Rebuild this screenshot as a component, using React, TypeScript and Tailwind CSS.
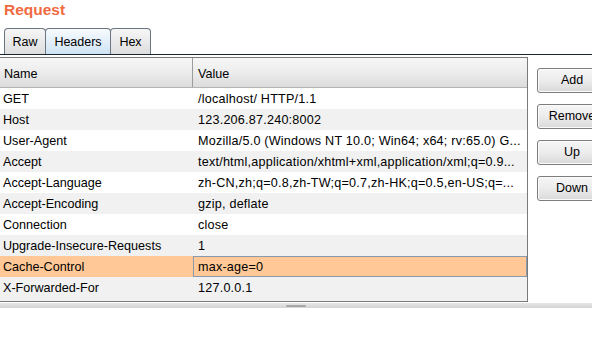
import React from "react";

const rows: [string, string][] = [
  ["GET", "/localhost/ HTTP/1.1"],
  ["Host", "123.206.87.240:8002"],
  ["User-Agent", "Mozilla/5.0 (Windows NT 10.0; Win64; x64; rv:65.0) G..."],
  ["Accept", "text/html,application/xhtml+xml,application/xml;q=0.9..."],
  ["Accept-Language", "zh-CN,zh;q=0.8,zh-TW;q=0.7,zh-HK;q=0.5,en-US;q=..."],
  ["Accept-Encoding", "gzip, deflate"],
  ["Connection", "close"],
  ["Upgrade-Insecure-Requests", "1"],
  ["Cache-Control", "max-age=0"],
  ["X-Forwarded-For", "127.0.0.1"],
];

function Tab({ label, active, w }: { label: string; active?: boolean; w: string }) {
  return (
    <div
      className={
        "h-[26px] flex items-center justify-center border border-b-0 border-[#6c7682] rounded-t-[4px] -mr-px " +
        w +
        (active
          ? " bg-gradient-to-b from-[#f7fbfe] to-[#cfe3f3]"
          : " bg-gradient-to-b from-[#f6f6f6] to-[#dedede]")
      }
    >
      <span className="text-[12.5px] text-black leading-none pt-[2px]">{label}</span>
    </div>
  );
}

function Btn({ label }: { label: string }) {
  return (
    <div className="w-[70px] h-[25px] shrink-0 rounded-[3px] border border-[#7d7d7d] bg-gradient-to-b from-[#f6f6f6] via-[#ececec] to-[#d9d9d9] shadow-[inset_0_0_0_1px_#fbfbfb] flex items-center justify-center">
      <span className="text-[12.5px] text-black leading-none">{label}</span>
    </div>
  );
}

export default function App() {
  return (
    <div className="w-[592px] h-[357px] bg-white overflow-hidden font-['Liberation_Sans',Arial,sans-serif] text-black">
      <div className="h-[20px] pl-[4px] pt-[1px] text-[15.5px] font-bold text-[#f06a3f] leading-[18px]">
        Request
      </div>
      <div className="h-[8px]" />
      <div className="flex items-end pl-[4px] border-b border-[#1a2533]">
        <Tab label="Raw" w="w-[42px]" />
        <Tab label="Headers" active w="w-[66px]" />
        <Tab label="Hex" w="w-[41px]" />
      </div>
      <div className="h-[2px]" />
      <div className="flex">
        <div className="w-[528px] shrink-0 h-[245px] border-t border-r border-b border-[#7a7a7a] bg-white flex flex-col">
          <div className="h-[30px] shrink-0 flex border-b border-[#b4b4b4] bg-gradient-to-b from-[#f7f7f7] via-[#ececec] to-[#dcdcdc] text-[12.6px]">
            <div className="w-[193px] border-r border-[#9c9c9c] pl-[4px] pt-[4px] flex items-center">Name</div>
            <div className="flex-1 pl-[5px] pt-[4px] flex items-center">Value</div>
          </div>
          {rows.map(([n, v], i) => {
            const sel = i === 8;
            const bg = sel ? "bg-[#ffc896]" : i % 2 === 0 ? "bg-white" : "bg-[#f1f1f1]";
            return (
              <div key={n} className={"h-[21px] flex shrink-0 text-[12.6px] " + bg}>
                <div className="w-[193px] pl-[3px] pt-[1px] flex items-center whitespace-nowrap overflow-hidden">{n}</div>
                <div
                  className={
                    "flex-1 pt-[1px] flex items-center whitespace-nowrap overflow-hidden tracking-[0.22px] " +
                    (sel ? "border border-[#8a99ab] pl-[4px]" : "pl-[5px]")
                  }
                >
                  {v}
                </div>
              </div>
            );
          })}
          <div className="flex-1 bg-[#f1f1f1]" />
        </div>
        <div className="pl-[9px] pt-[11px] flex flex-col gap-[11px] shrink-0">
          <Btn label="Add" />
          <Btn label="Remove" />
          <Btn label="Up" />
          <Btn label="Down" />
        </div>
      </div>
      <div className="mt-[1px] h-[5px] bg-gradient-to-b from-[#e6e6e6] to-[#d4d4d4] flex justify-center items-center">
        <div className="w-[20px] h-[2px] bg-[#a8a8a8] rounded-full" />
      </div>
      <div className="flex-1 bg-[#fdfdfb]" />
    </div>
  );
}
